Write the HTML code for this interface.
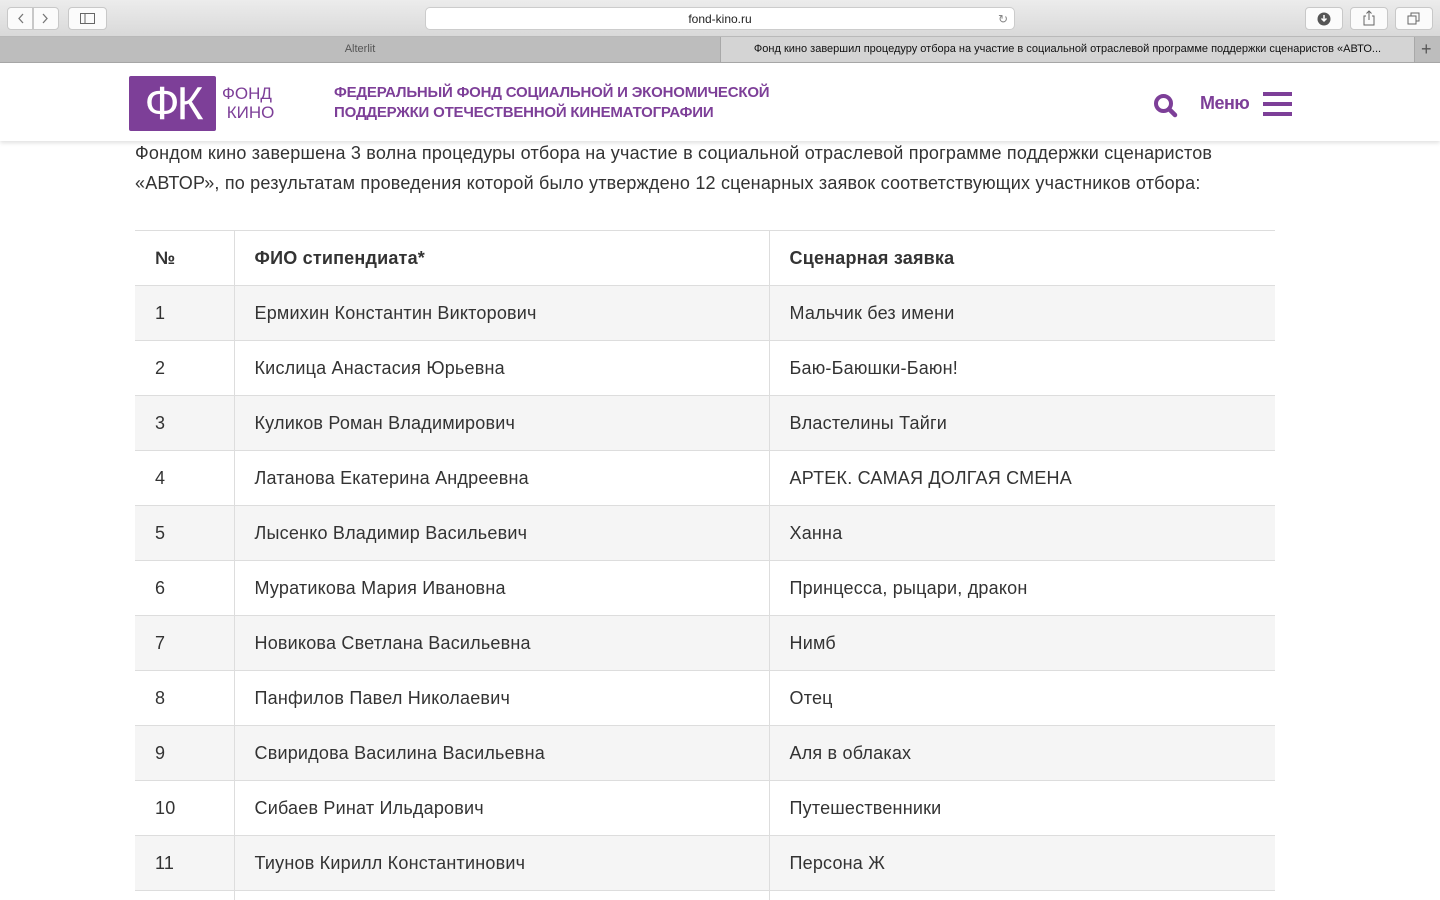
<!DOCTYPE html>
<html style="overflow:hidden;height:900px"><head><meta charset="utf-8"><style>
*{margin:0;padding:0;box-sizing:border-box}
body{width:1440px;height:900px;overflow:hidden;background:#fff;font-family:"Liberation Sans","DejaVu Sans",sans-serif;color:#333;position:relative}
.tb{position:absolute;left:0;top:0;width:1440px;height:37px;background:linear-gradient(#ececec,#d9d9d9);border-bottom:1px solid #b9b9b9}
.btn{position:absolute;top:7px;height:23px;background:#fbfbfb;border:1px solid #c8c8c8;border-radius:4px}
.url{position:absolute;left:425px;top:7px;width:590px;height:23px;background:#fff;border:1px solid #ccc;border-radius:5px;font-size:12px;text-align:center;line-height:22px;color:#222}
.tabs{position:absolute;left:0;top:37px;width:1440px;height:26px;background:#bdbdbd;border-bottom:1px solid #a8a8a8;font-size:11px;line-height:25px}
.tab1{position:absolute;left:0;width:720px;text-align:center;color:#555}
.tab2{position:absolute;left:720px;width:695px;background:#d4d4d4;text-align:center;color:#111;border-left:1px solid #a8a8a8;border-right:1px solid #a8a8a8;height:25px}
.hdr{position:absolute;left:0;top:63px;width:1440px;height:78px;background:#fff;box-shadow:0 2px 4px rgba(0,0,0,.12);z-index:2}
.logo{position:absolute;left:129px;top:13px;width:87px;height:55px;background:#7d3f98;border-radius:2px;color:#fff;font-size:46px;line-height:55px;text-align:center;letter-spacing:-3px}
.lt{position:absolute;left:222px;top:21px;color:#7d3f98;font-size:17px;line-height:19px}
.tt{position:absolute;left:334px;top:20px;color:#7d3f98;font-size:15px;line-height:20px;font-weight:bold;letter-spacing:-.2px}
.menu{position:absolute;left:1200px;top:30px;color:#7d3f98;font-size:18px;font-weight:bold;letter-spacing:-.5px}
.intro{position:absolute;left:135px;top:138px;width:1100px;font-size:18px;letter-spacing:.2px;line-height:30px;color:#333}
table{position:absolute;left:135px;top:230px;width:1140px;border-collapse:collapse;font-size:18px;letter-spacing:.2px}
td{height:55px;border-top:1px solid #ddd;padding-left:20px;vertical-align:middle}
td+td{border-left:1px solid #ddd}
tr:nth-child(even) td{background:#f5f5f5}
</style></head><body>
<div class="tb">
<div class="btn" style="left:7px;width:26px;border-radius:4px 0 0 4px"></div>
<div class="btn" style="left:33px;width:26px;border-radius:0 4px 4px 0"></div>
<svg style="position:absolute;left:7px;top:7px" width="52" height="23"><path d="M16 7l-4 4.5 4 4.5M36 7l4 4.5-4 4.5" stroke="#777" stroke-width="1.3" fill="none"/></svg>
<div class="btn" style="left:68px;width:39px"></div>
<svg style="position:absolute;left:80px;top:13px" width="15" height="11"><rect x=".5" y=".5" width="14" height="10" fill="none" stroke="#666"/><line x1="5" y1="0" x2="5" y2="11" stroke="#666"/></svg>
<div class="url">fond-kino.ru<span style="position:absolute;right:6px;color:#888">↻</span></div>
<div class="btn" style="left:1305px;width:38px"></div>
<svg style="position:absolute;left:1317px;top:12px" width="14" height="14"><circle cx="7" cy="7" r="6.5" fill="#555"/><path d="M7 3v6M4.5 6.5L7 9l2.5-2.5" stroke="#fff" stroke-width="1.5" fill="none"/></svg>
<div class="btn" style="left:1350px;width:38px"></div>
<svg style="position:absolute;left:1362px;top:10px" width="14" height="16"><path d="M4 6H2v9h10V6h-2M7 1v9M4.5 3.5L7 1l2.5 2.5" stroke="#666" fill="none"/></svg>
<div class="btn" style="left:1395px;width:38px"></div>
<svg style="position:absolute;left:1407px;top:12px" width="14" height="13"><rect x="1" y="4" width="8" height="8" fill="none" stroke="#666"/><path d="M4 4V1h8v8H9" stroke="#666" fill="none"/></svg>
</div>
<div class="tabs"><div class="tab1">Alterlit</div><div class="tab2">Фонд кино завершил процедуру отбора на участие в социальной отраслевой программе поддержки сценаристов «АВТО...</div><div style="position:absolute;left:1421px;top:0;font-size:18px;color:#555">+</div></div>
<div class="hdr">
<div class="logo">ФК</div>
<div class="lt">ФОНД<br>&nbsp;КИНО</div>
<div class="tt">ФЕДЕРАЛЬНЫЙ ФОНД СОЦИАЛЬНОЙ И ЭКОНОМИЧЕСКОЙ<br>ПОДДЕРЖКИ ОТЕЧЕСТВЕННОЙ КИНЕМАТОГРАФИИ</div>
<svg style="position:absolute;left:1153px;top:30px" width="26" height="26"><circle cx="10.5" cy="10.5" r="7.5" stroke="#7d3f98" stroke-width="4" fill="none"/><path d="M16 16l6 6" stroke="#7d3f98" stroke-width="4.5" stroke-linecap="round"/></svg>
<div class="menu">Меню</div>
<svg style="position:absolute;left:1263px;top:29px" width="29" height="24"><rect y="0" width="29" height="4" fill="#7d3f98"/><rect y="10" width="29" height="4" fill="#7d3f98"/><rect y="20" width="29" height="4" fill="#7d3f98"/></svg>
</div>
<div class="intro">Фондом кино завершена 3 волна процедуры отбора на участие в социальной отраслевой программе поддержки сценаристов «АВТОР», по результатам проведения которой было утверждено 12 сценарных заявок соответствующих участников отбора:</div>
<table>
<col style="width:99px"><col style="width:535px"><col>
<tr><td><b>№</b></td><td><b>ФИО стипендиата*</b></td><td><b>Сценарная заявка</b></td></tr>
<tr><td>1</td><td>Ермихин Константин Викторович</td><td>Мальчик без имени</td></tr>
<tr><td>2</td><td>Кислица Анастасия Юрьевна</td><td>Баю-Баюшки-Баюн!</td></tr>
<tr><td>3</td><td>Куликов Роман Владимирович</td><td>Властелины Тайги</td></tr>
<tr><td>4</td><td>Латанова Екатерина Андреевна</td><td>АРТЕК. САМАЯ ДОЛГАЯ СМЕНА</td></tr>
<tr><td>5</td><td>Лысенко Владимир Васильевич</td><td>Ханна</td></tr>
<tr><td>6</td><td>Муратикова Мария Ивановна</td><td>Принцесса, рыцари, дракон</td></tr>
<tr><td>7</td><td>Новикова Светлана Васильевна</td><td>Нимб</td></tr>
<tr><td>8</td><td>Панфилов Павел Николаевич</td><td>Отец</td></tr>
<tr><td>9</td><td>Свиридова Василина Васильевна</td><td>Аля в облаках</td></tr>
<tr><td>10</td><td>Сибаев Ринат Ильдарович</td><td>Путешественники</td></tr>
<tr><td>11</td><td>Тиунов Кирилл Константинович</td><td>Персона Ж</td></tr>
<tr><td style="height:10px"></td><td style="height:10px"></td><td style="height:10px"></td></tr>
</table>
</body></html>
